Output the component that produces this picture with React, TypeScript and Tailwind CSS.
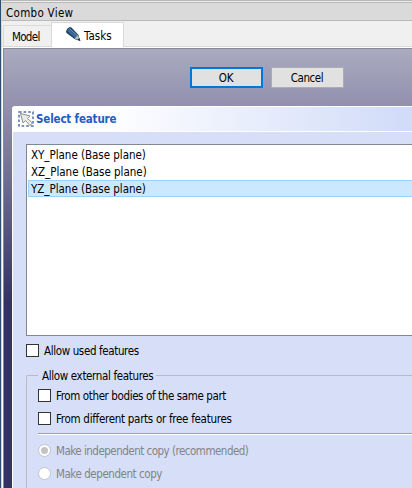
import type { ReactNode } from "react";

function CheckRow({ children }: { children: ReactNode }) {
  return (
    <label className="flex h-[13px] items-center">
      <span className="mr-[5px] size-[13px] shrink-0 border border-[#333] bg-white" />
      <span className="pt-[2px]">{children}</span>
    </label>
  );
}

function RadioRow({ selected, children }: { selected?: boolean; children: ReactNode }) {
  return (
    <label className="flex h-[13px] items-center text-[#838383]">
      <span className="mr-[5px] flex size-[13px] shrink-0 items-center justify-center rounded-full border border-[#bcc4d4] bg-white">
        {selected && <span className="size-[7px] rounded-full bg-[#c4c4c4]" />}
      </span>
      <span className="pt-[2px]">{children}</span>
    </label>
  );
}

function Pencil() {
  return (
    <svg className="-mt-[2px]" width="17" height="17" viewBox="0 0 17 17">
      <path d="M1 5.500 2 3l2.500-2 2 .500 7 7.500 1.500 6-5.500-2L1.500 7Z" fill="#1d4367" />
      <path d="M2 5 4.500 2l8 7.500L10 12Z" fill="#3a6894" />
      <path d="m4.500 2.500 7.500 7" stroke="#6c93b8" strokeWidth="1" />
      <path d="m9.500 12.500 3.500-3.500 1.500 5Z" fill="#b9c2c6" />
      <path d="m13 13 1.500-1 1 3-2.500-1Z" fill="#26313c" />
    </svg>
  );
}

function SelectIcon() {
  return (
    <svg width="16" height="16" viewBox="0 0 16 16">
      <rect x="1" y="1" width="14" height="14" fill="none" stroke="#4f6fa6" strokeWidth="1.5" strokeDasharray="2.600 2" />
      <path d="M2.500 2.500 12 5 9.500 7.500l5 4.500-2.500 2.500-4.500-5L5 12Z" fill="#ecece9" stroke="#8c8e8f" strokeWidth="1" />
    </svg>
  );
}

export default function App() {
  return (
    <div className="flex h-[488px] w-[412px] overflow-hidden border-l border-[#2b4f72] bg-[#f0f0f0] font-['DejaVu_Sans_Condensed','DejaVu_Sans',sans-serif] text-[11.5px] leading-[17px] whitespace-nowrap text-black [font-stretch:condensed]">
      <div className="flex w-[411px] shrink-0 flex-col border-l border-[#d6d6d6]">
        <div className="h-[3px] shrink-0 border-y border-[#b8b8b8] bg-[#eee]" />
        <div className="flex h-[18px] shrink-0 items-center border-b border-[#b9b9b9] bg-[#dadada] pt-[3px] pl-[4px]">
          <span className="tracking-[0.3px]">Combo View</span>
        </div>
        <div className="flex h-[26px] shrink-0 items-end border-b border-[#d9d9d9] pl-px">
          <div className="flex h-[21px] w-[48px] items-center border-t border-l border-[#d9d9d9] pt-[2px] pl-[8px] tracking-[-0.7px]">Model</div>
          <div className="-mb-px flex h-[25px] w-[73px] items-center border border-b-0 border-[#d9d9d9] bg-white pt-px pl-[13px]">
            <Pencil /><span className="ml-[2px] pt-px">Tasks</span>
          </div>
        </div>
        <div className="flex grow flex-col border-l border-white bg-white pt-px">
          <div className="flex grow flex-col border-t border-l border-[#888b96] bg-[linear-gradient(180deg,#aaaac0_0px,#9290ae_57px,#333366_252px,#333366_440px)] pl-[8px]">
            <div className="flex h-[57px] shrink-0 gap-[8px] pt-[18px] pl-[178px]">
              <button className="h-[21px] w-[73px] border-2 border-[#0078d7] bg-[#e1e1e1] pt-px pr-px leading-[16px] tracking-[-0.2px]">OK</button>
              <button className="h-[21px] w-[73px] border border-[#adadad] bg-[#e1e1e1] pt-px pr-px leading-[18px] tracking-[-0.45px]">Cancel</button>
            </div>
            <div className="flex grow flex-col rounded-tl-[3px] border-t border-l border-white bg-[#d6dff7]">
              <div className="flex h-[25px] shrink-0 items-center rounded-tl-[2px] border-b border-white bg-[linear-gradient(90deg,#fff_0%,#fff_22%,#d0dbf8_100%)] pl-[5px] font-bold text-[#215dc6]">
                <SelectIcon /><span className="ml-[2px] tracking-[-0.16px]">Select feature</span>
              </div>
              <div className="mt-[12px] ml-[13px] h-[192px] shrink-0 border border-r-0 border-[#828790] bg-white pt-[2px] pl-px tracking-[-0.03px]">
                <div className="h-[17px] pl-[3px]">XY_Plane (Base plane)</div>
                <div className="h-[16px] pl-[3px]">XZ_Plane (Base plane)</div>
                <div className="h-[17px] border border-r-0 border-[#99d1ff] bg-[#cce8ff] pl-[2px] leading-[16px]">YZ_Plane (Base plane)</div>
              </div>
              <div className="mt-[8px] ml-[13px] tracking-[-0.37px]"><CheckRow>Allow used features</CheckRow></div>
              <div className="ml-[13px] flex h-[27px] items-end">
                <span className="h-[9px] w-[12px] rounded-tl-[2px] border-t border-l border-[#b9bcbe]" />
                <span className="-mb-px w-[118px] pl-[4px] tracking-[-0.35px]">Allow external features</span>
                <span className="h-[9px] grow border-t border-[#b9bcbe]" />
              </div>
              <div className="ml-[13px] flex grow flex-col border-l border-[#b9bcbe] pt-[5px] pl-[11px]">
                <div className="tracking-[-0.39px]"><CheckRow>From other bodies of the same part</CheckRow></div>
                <div className="mt-[10px] tracking-[-0.29px]"><CheckRow>From different parts or free features</CheckRow></div>
                <div className="mt-[8px] h-[2px] border-t border-[#a0a0a0] bg-white" />
                <div className="mt-[9px] tracking-[-0.51px]"><RadioRow selected>Make independent copy (recommended)</RadioRow></div>
                <div className="mt-[10px] tracking-[-0.45px]"><RadioRow>Make dependent copy</RadioRow></div>
              </div>
            </div>
          </div>
        </div>
      </div>
    </div>
  );
}
